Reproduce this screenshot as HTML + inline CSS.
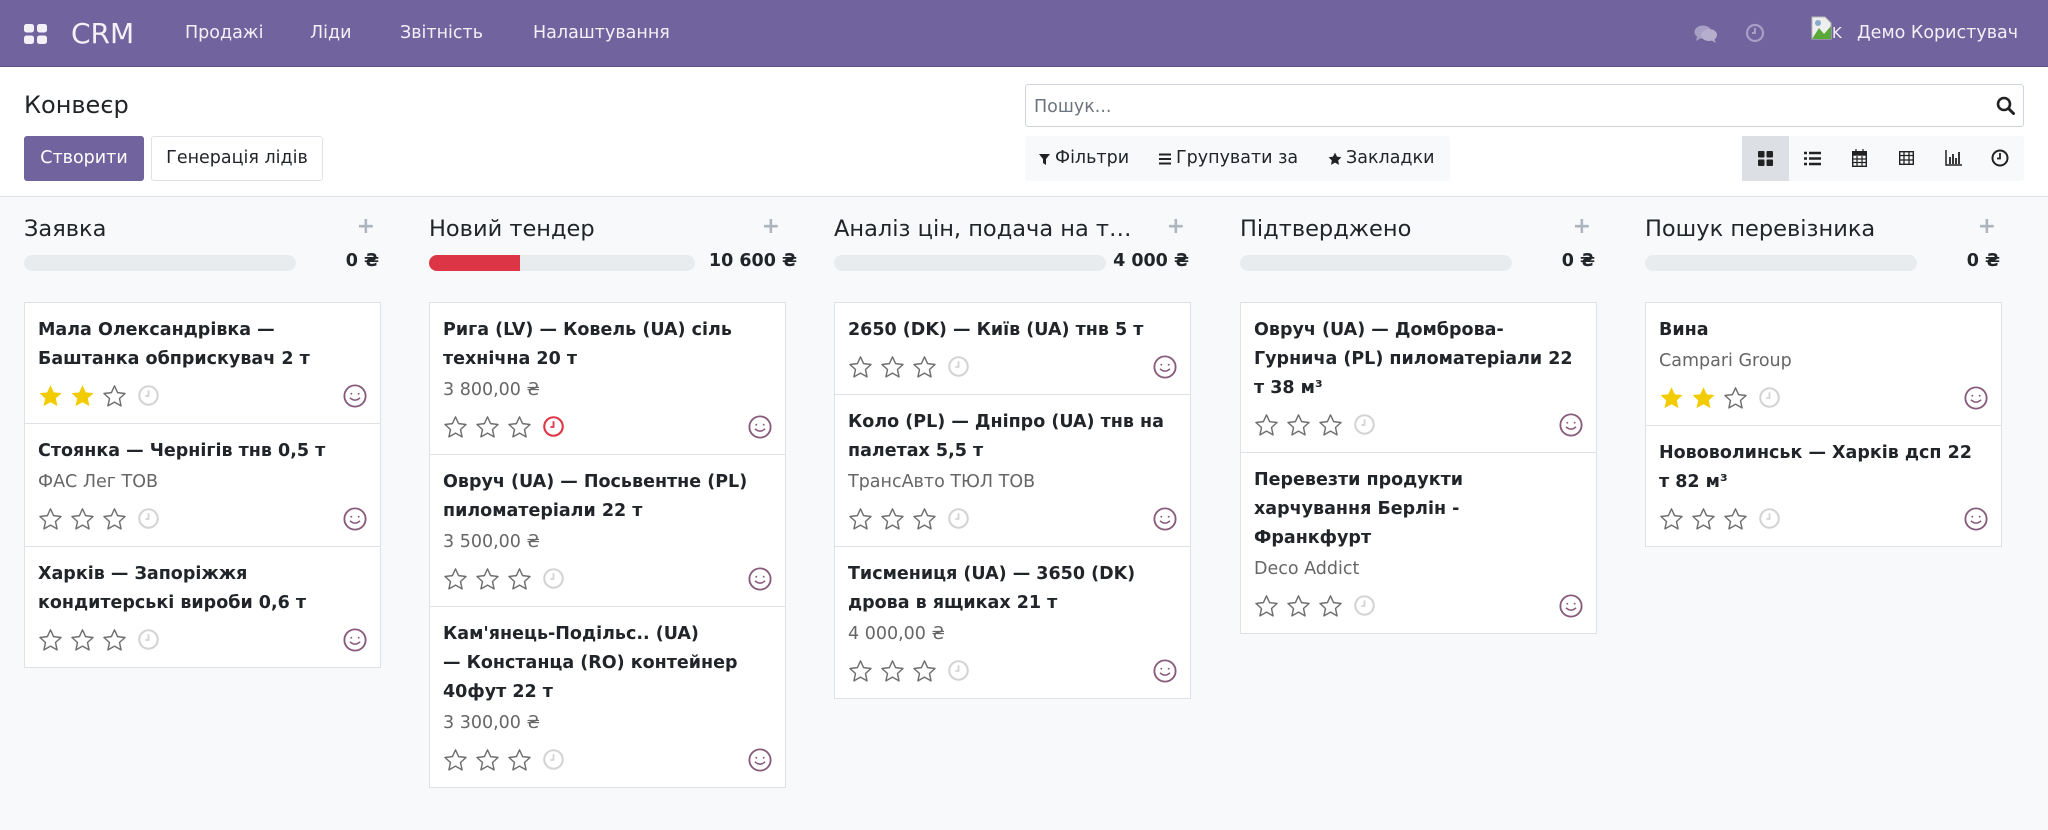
<!DOCTYPE html>
<html><head><meta charset="utf-8">
<style>
*{box-sizing:border-box;margin:0;padding:0}
body{width:2048px;height:830px;overflow:hidden;background:#f8f9fa;font-family:"DejaVu Sans","Liberation Sans",sans-serif;color:#212529;position:relative}
.nav{position:absolute;left:0;top:0;width:2048px;height:67px;background:#71639e;border-bottom:1px solid #5f5384;color:#fff}
.nav .t{position:absolute;top:0;line-height:67px;font-size:17.5px;color:#f3f1f7}
.cp{position:absolute;left:0;top:67px;width:2048px;height:130px;background:#fff;border-bottom:1px solid #dee2e6}
.btn{position:absolute;top:136px;height:45px;line-height:43px;font-size:17.5px;border-radius:3px;text-align:center}
.col{position:absolute;top:200px;width:357px}
.ch{position:absolute;left:0;top:16px;font-size:22.5px;white-space:nowrap}
.plus{position:absolute;right:6px;top:14px;font-size:22px;color:#adb5bd;font-weight:bold}
.bar{position:absolute;left:0;top:55px;width:272px;height:16px;background:#e9ecef;border-radius:8px;overflow:hidden}
.val{position:absolute;right:2px;top:51px;font-size:17.5px;font-weight:bold;white-space:nowrap}
.cards{position:absolute;left:0;top:103px;width:357px}
.card{background:#fff;border:1px solid #dee2e6;margin-top:-1px;padding:13px 13px 13px 13px;position:relative}
.ti{font-weight:bold;font-size:17.5px;line-height:29px;white-space:nowrap}
.sub{font-size:17.5px;line-height:30px;margin-top:1px;color:#666;white-space:nowrap}
.row{height:28px;margin-top:8px;position:relative}
.row svg{position:absolute;top:2px}
.av{position:absolute;right:0;top:2px}
.vb{position:absolute;top:136px;width:47px;height:45px}
</style></head><body>
<div class="nav">
 <svg style="position:absolute;left:24px;top:24px" width="23" height="20" viewBox="0 0 23 20"><rect x="0" y="0" width="10" height="8.5" rx="2.5" fill="#f3f1f7"/><rect x="13" y="0" width="10" height="8.5" rx="2.5" fill="#f3f1f7"/><rect x="0" y="11.5" width="10" height="8.5" rx="2.5" fill="#f3f1f7"/><rect x="13" y="11.5" width="10" height="8.5" rx="2.5" fill="#f3f1f7"/></svg>
 <div class="t" style="left:71px;font-size:28px">CRM</div>
 <div class="t" style="left:185px">Продажі</div>
 <div class="t" style="left:310px">Ліди</div>
 <div class="t" style="left:400px">Звітність</div>
 <div class="t" style="left:533px">Налаштування</div>
 <svg style="position:absolute;left:1694px;top:24px" width="24" height="20" viewBox="0 0 24 20"><ellipse cx="9" cy="8" rx="8.5" ry="6.5" fill="#a79fc4"/><path d="M3 13 L2 17 L7 14Z" fill="#a79fc4"/><ellipse cx="15" cy="11" rx="8" ry="6" fill="#b5aecd"/><path d="M20 15 L22 19 L17 16Z" fill="#b5aecd"/></svg>
 <svg style="position:absolute;left:1745px;top:23px" width="20" height="20" viewBox="0 0 20 20"><circle cx="10" cy="10" r="8" fill="none" stroke="#a79fc4" stroke-width="2.2"/><path d="M10 5v5H7" fill="none" stroke="#a79fc4" stroke-width="2"/></svg>
 <svg style="position:absolute;left:1811px;top:16px" width="22" height="24" viewBox="0 0 22 24"><path d="M1 1h13l6 6v16H1z" fill="#eee" stroke="#bbb"/><path d="M1 23 L8 12 L13 18 L20 10 V23Z" fill="#5aa83a"/><circle cx="7" cy="7" r="3" fill="#8ac"/></svg>
 <div class="t" style="left:1832px;font-size:15px">K</div>
 <div class="t" style="left:1857px;font-size:17.5px">Демо Користувач</div>
</div>
<div class="cp">
 <div style="position:absolute;left:24px;top:23px;font-size:24px;line-height:30px">Конвеєр</div>
</div>
<div class="btn" style="left:24px;width:120px;background:#71639e;color:#fff;border:1px solid #71639e">Створити</div>
<div class="btn" style="left:151px;width:172px;background:#fff;color:#212529;border:1px solid #dee2e6">Генерація лідів</div>
<div style="position:absolute;left:1025px;top:84px;width:999px;height:43px;border:1px solid #ced4da;border-radius:3px;background:#fff">
 <div style="position:absolute;left:8px;top:2px;line-height:41px;font-size:17.5px;color:#6c757d">Пошук...</div>
 <svg style="position:absolute;right:8px;top:11px" width="19" height="19" viewBox="0 0 19 19"><circle cx="8" cy="8" r="6" fill="none" stroke="#222" stroke-width="2.6"/><path d="M12.5 12.5 L17.5 17.5" stroke="#222" stroke-width="3" stroke-linecap="round"/></svg>
</div>
<div style="position:absolute;left:1025px;top:136px;width:425px;height:45px;background:#f8f9fa;border-radius:3px;font-size:17.5px;line-height:45px">
 <svg style="position:absolute;left:14px;top:18px" width="11" height="11" viewBox="0 0 11 11"><path d="M0 0h11L7 5v6L4 9V5Z" fill="#222"/></svg>
 <span style="position:absolute;left:30px">Фільтри</span>
 <svg style="position:absolute;left:134px;top:17px" width="12" height="12" viewBox="0 0 12 12"><path d="M0 1.5h12M0 6h12M0 10.5h12" stroke="#222" stroke-width="2"/></svg>
 <span style="position:absolute;left:151px">Групувати за</span>
 <svg style="position:absolute;left:303px;top:16px" width="14" height="14" viewBox="0 0 24 24"><path d="M12 1l3.4 7 7.6 1-5.5 5.3 1.3 7.7L12 18.3 5.2 22l1.3-7.7L1 9l7.6-1z" fill="#222"/></svg>
 <span style="position:absolute;left:321px">Закладки</span>
</div>
<div style="position:absolute;left:1742px;top:136px;width:282px;height:45px;background:#f8f9fa;border-radius:3px"></div>
<div class="vb" style="left:1742px;background:#dcdfe4"><svg style="position:absolute;left:16px;top:15px" width="15" height="15" viewBox="0 0 15 15"><rect x="0" y="0" width="6.5" height="6.5" rx="1" fill="#222"/><rect x="8.5" y="0" width="6.5" height="6.5" rx="1" fill="#222"/><rect x="0" y="8.5" width="6.5" height="6.5" rx="1" fill="#222"/><rect x="8.5" y="8.5" width="6.5" height="6.5" rx="1" fill="#222"/></svg></div>
<div class="vb" style="left:1789px"><svg style="position:absolute;left:15px;top:15px" width="17" height="15" viewBox="0 0 17 15"><path d="M0 2h3M5 2h12M0 7.5h3M5 7.5h12M0 13h3M5 13h12" stroke="#222" stroke-width="2.6"/></svg></div>
<div class="vb" style="left:1836px"><svg style="position:absolute;left:16px;top:13px" width="15" height="18" viewBox="0 0 15 18"><rect x="0.7" y="2.7" width="13.6" height="14.6" fill="none" stroke="#222" stroke-width="1.4"/><rect x="0.7" y="2.7" width="13.6" height="4" fill="#222"/><path d="M4 0v4M11 0v4M1 10h13M1 13.5h13M5 7v10M10 7v10" stroke="#222" stroke-width="1.2"/></svg></div>
<div class="vb" style="left:1883px"><svg style="position:absolute;left:16px;top:15px" width="15" height="14" viewBox="0 0 15 14"><rect x="0.7" y="0.7" width="13.6" height="12.6" fill="none" stroke="#222" stroke-width="1.4"/><path d="M1 4.5h13M1 9h13M5 1v12M10 1v12" stroke="#222" stroke-width="1.3"/></svg></div>
<div class="vb" style="left:1930px"><svg style="position:absolute;left:15px;top:14px" width="17" height="16" viewBox="0 0 17 16"><path d="M1 0v15h16" fill="none" stroke="#222" stroke-width="1.5"/><path d="M5 7v7M8 4v10M11 8v6M14 2v12" stroke="#222" stroke-width="1.8"/></svg></div>
<div class="vb" style="left:1977px"><svg style="position:absolute;left:14px;top:13px" width="18" height="18" viewBox="0 0 18 18"><circle cx="9" cy="9" r="7.5" fill="none" stroke="#222" stroke-width="2"/><path d="M9 4v5.5H6" fill="none" stroke="#222" stroke-width="1.8"/></svg></div>

<svg width="0" height="0" style="position:absolute">
 <defs>
  <symbol id="so" viewBox="0 0 24 24"><path d="M12 1.8l3 6.5 7.1.8-5.3 4.8 1.5 7.1L12 17.4l-6.3 3.6 1.5-7.1L1.9 9.1 9 8.3z" fill="none" stroke="#6f6f6f" stroke-width="1.4" stroke-linejoin="round"/></symbol>
  <symbol id="sf" viewBox="0 0 24 24"><path d="M12 1.2l3.2 6.8 7.4.8-5.5 5 1.6 7.4L12 17.5l-6.7 3.7 1.6-7.4-5.5-5 7.4-.8z" fill="#f3cc00"/></symbol>
  <symbol id="ck" viewBox="0 0 20 20"><circle cx="10" cy="10" r="8.8" fill="none" stroke="currentColor" stroke-width="2"/><path d="M10 5v5.5H7" fill="none" stroke="currentColor" stroke-width="1.7"/></symbol>
  <symbol id="av" viewBox="0 0 26 26"><circle cx="13" cy="13" r="11.5" fill="none" stroke="#875a7b" stroke-width="2"/><circle cx="9" cy="10.5" r="1" fill="#875a7b"/><circle cx="17" cy="10.5" r="1" fill="#875a7b"/><path d="M7.5 15 Q13 20 18.5 15" fill="none" stroke="#875a7b" stroke-width="1.6"/></symbol>
 </defs>
</svg>

<!-- Column 1 -->
<div class="col" style="left:24px">
 <div class="ch">Заявка</div><div class="plus">+</div>
 <div class="bar"></div><div class="val">0 ₴</div>
 <div class="cards">
  <div class="card"><div class="ti">Мала Олександрівка —<br>Баштанка обприскувач 2 т</div>
   <div class="row"><svg style="left:0" width="25" height="25"><use href="#sf"/></svg><svg style="left:32px" width="25" height="25"><use href="#sf"/></svg><svg style="left:64px" width="25" height="25"><use href="#so"/></svg><svg style="left:100px;top:3px;color:#d4d4d4" width="21" height="21"><use href="#ck"/></svg><svg class="av" width="24" height="24"><use href="#av"/></svg></div></div>
  <div class="card"><div class="ti">Стоянка — Чернігів тнв 0,5 т</div><div class="sub">ФАС Лег ТОВ</div>
   <div class="row"><svg style="left:0" width="25" height="25"><use href="#so"/></svg><svg style="left:32px" width="25" height="25"><use href="#so"/></svg><svg style="left:64px" width="25" height="25"><use href="#so"/></svg><svg style="left:100px;top:3px;color:#d4d4d4" width="21" height="21"><use href="#ck"/></svg><svg class="av" width="24" height="24"><use href="#av"/></svg></div></div>
  <div class="card"><div class="ti">Харків — Запоріжжя<br>кондитерські вироби 0,6 т</div>
   <div class="row"><svg style="left:0" width="25" height="25"><use href="#so"/></svg><svg style="left:32px" width="25" height="25"><use href="#so"/></svg><svg style="left:64px" width="25" height="25"><use href="#so"/></svg><svg style="left:100px;top:3px;color:#d4d4d4" width="21" height="21"><use href="#ck"/></svg><svg class="av" width="24" height="24"><use href="#av"/></svg></div></div>
 </div>
</div>

<!-- Column 2 -->
<div class="col" style="left:429px">
 <div class="ch">Новий тендер</div><div class="plus">+</div>
 <div class="bar" style="width:266px"><div style="width:91px;height:16px;background:#dc3545"></div></div><div class="val" style="right:-11px">10 600 ₴</div>
 <div class="cards">
  <div class="card"><div class="ti">Рига (LV) — Ковель (UA) сіль<br>технічна 20 т</div><div class="sub">3 800,00 ₴</div>
   <div class="row"><svg style="left:0" width="25" height="25"><use href="#so"/></svg><svg style="left:32px" width="25" height="25"><use href="#so"/></svg><svg style="left:64px" width="25" height="25"><use href="#so"/></svg><svg style="left:100px;top:3px;color:#dc3545" width="21" height="21"><use href="#ck"/></svg><svg class="av" width="24" height="24"><use href="#av"/></svg></div></div>
  <div class="card"><div class="ti">Овруч (UA) — Посьвентне (PL)<br>пиломатеріали 22 т</div><div class="sub">3 500,00 ₴</div>
   <div class="row"><svg style="left:0" width="25" height="25"><use href="#so"/></svg><svg style="left:32px" width="25" height="25"><use href="#so"/></svg><svg style="left:64px" width="25" height="25"><use href="#so"/></svg><svg style="left:100px;top:3px;color:#d4d4d4" width="21" height="21"><use href="#ck"/></svg><svg class="av" width="24" height="24"><use href="#av"/></svg></div></div>
  <div class="card"><div class="ti">Кам'янець-Подільс.. (UA)<br>— Констанца (RO) контейнер<br>40фут 22 т</div><div class="sub">3 300,00 ₴</div>
   <div class="row"><svg style="left:0" width="25" height="25"><use href="#so"/></svg><svg style="left:32px" width="25" height="25"><use href="#so"/></svg><svg style="left:64px" width="25" height="25"><use href="#so"/></svg><svg style="left:100px;top:3px;color:#d4d4d4" width="21" height="21"><use href="#ck"/></svg><svg class="av" width="24" height="24"><use href="#av"/></svg></div></div>
 </div>
</div>

<!-- Column 3 -->
<div class="col" style="left:834px">
 <div class="ch">Аналіз цін, подача на т…</div><div class="plus">+</div>
 <div class="bar" style="width:272px"></div><div class="val">4 000 ₴</div>
 <div class="cards">
  <div class="card"><div class="ti">2650 (DK) — Київ (UA) тнв 5 т</div>
   <div class="row"><svg style="left:0" width="25" height="25"><use href="#so"/></svg><svg style="left:32px" width="25" height="25"><use href="#so"/></svg><svg style="left:64px" width="25" height="25"><use href="#so"/></svg><svg style="left:100px;top:3px;color:#d4d4d4" width="21" height="21"><use href="#ck"/></svg><svg class="av" width="24" height="24"><use href="#av"/></svg></div></div>
  <div class="card"><div class="ti">Коло (PL) — Дніпро (UA) тнв на<br>палетах 5,5 т</div><div class="sub">ТрансАвто ТЮЛ ТОВ</div>
   <div class="row"><svg style="left:0" width="25" height="25"><use href="#so"/></svg><svg style="left:32px" width="25" height="25"><use href="#so"/></svg><svg style="left:64px" width="25" height="25"><use href="#so"/></svg><svg style="left:100px;top:3px;color:#d4d4d4" width="21" height="21"><use href="#ck"/></svg><svg class="av" width="24" height="24"><use href="#av"/></svg></div></div>
  <div class="card"><div class="ti">Тисмениця (UA) — 3650 (DK)<br>дрова в ящиках 21 т</div><div class="sub">4 000,00 ₴</div>
   <div class="row"><svg style="left:0" width="25" height="25"><use href="#so"/></svg><svg style="left:32px" width="25" height="25"><use href="#so"/></svg><svg style="left:64px" width="25" height="25"><use href="#so"/></svg><svg style="left:100px;top:3px;color:#d4d4d4" width="21" height="21"><use href="#ck"/></svg><svg class="av" width="24" height="24"><use href="#av"/></svg></div></div>
 </div>
</div>

<!-- Column 4 -->
<div class="col" style="left:1240px">
 <div class="ch">Підтверджено</div><div class="plus">+</div>
 <div class="bar"></div><div class="val">0 ₴</div>
 <div class="cards">
  <div class="card"><div class="ti">Овруч (UA) — Домброва-<br>Гурнича (PL) пиломатеріали 22<br>т 38 м³</div>
   <div class="row"><svg style="left:0" width="25" height="25"><use href="#so"/></svg><svg style="left:32px" width="25" height="25"><use href="#so"/></svg><svg style="left:64px" width="25" height="25"><use href="#so"/></svg><svg style="left:100px;top:3px;color:#d4d4d4" width="21" height="21"><use href="#ck"/></svg><svg class="av" width="24" height="24"><use href="#av"/></svg></div></div>
  <div class="card"><div class="ti">Перевезти продукти<br>харчування Берлін -<br>Франкфурт</div><div class="sub">Deco Addict</div>
   <div class="row"><svg style="left:0" width="25" height="25"><use href="#so"/></svg><svg style="left:32px" width="25" height="25"><use href="#so"/></svg><svg style="left:64px" width="25" height="25"><use href="#so"/></svg><svg style="left:100px;top:3px;color:#d4d4d4" width="21" height="21"><use href="#ck"/></svg><svg class="av" width="24" height="24"><use href="#av"/></svg></div></div>
 </div>
</div>

<!-- Column 5 -->
<div class="col" style="left:1645px">
 <div class="ch">Пошук перевізника</div><div class="plus">+</div>
 <div class="bar"></div><div class="val">0 ₴</div>
 <div class="cards">
  <div class="card"><div class="ti">Вина</div><div class="sub">Campari Group</div>
   <div class="row"><svg style="left:0" width="25" height="25"><use href="#sf"/></svg><svg style="left:32px" width="25" height="25"><use href="#sf"/></svg><svg style="left:64px" width="25" height="25"><use href="#so"/></svg><svg style="left:100px;top:3px;color:#d4d4d4" width="21" height="21"><use href="#ck"/></svg><svg class="av" width="24" height="24"><use href="#av"/></svg></div></div>
  <div class="card"><div class="ti">Нововолинськ — Харків дсп 22<br>т 82 м³</div>
   <div class="row"><svg style="left:0" width="25" height="25"><use href="#so"/></svg><svg style="left:32px" width="25" height="25"><use href="#so"/></svg><svg style="left:64px" width="25" height="25"><use href="#so"/></svg><svg style="left:100px;top:3px;color:#d4d4d4" width="21" height="21"><use href="#ck"/></svg><svg class="av" width="24" height="24"><use href="#av"/></svg></div></div>
 </div>
</div>
</body></html>
